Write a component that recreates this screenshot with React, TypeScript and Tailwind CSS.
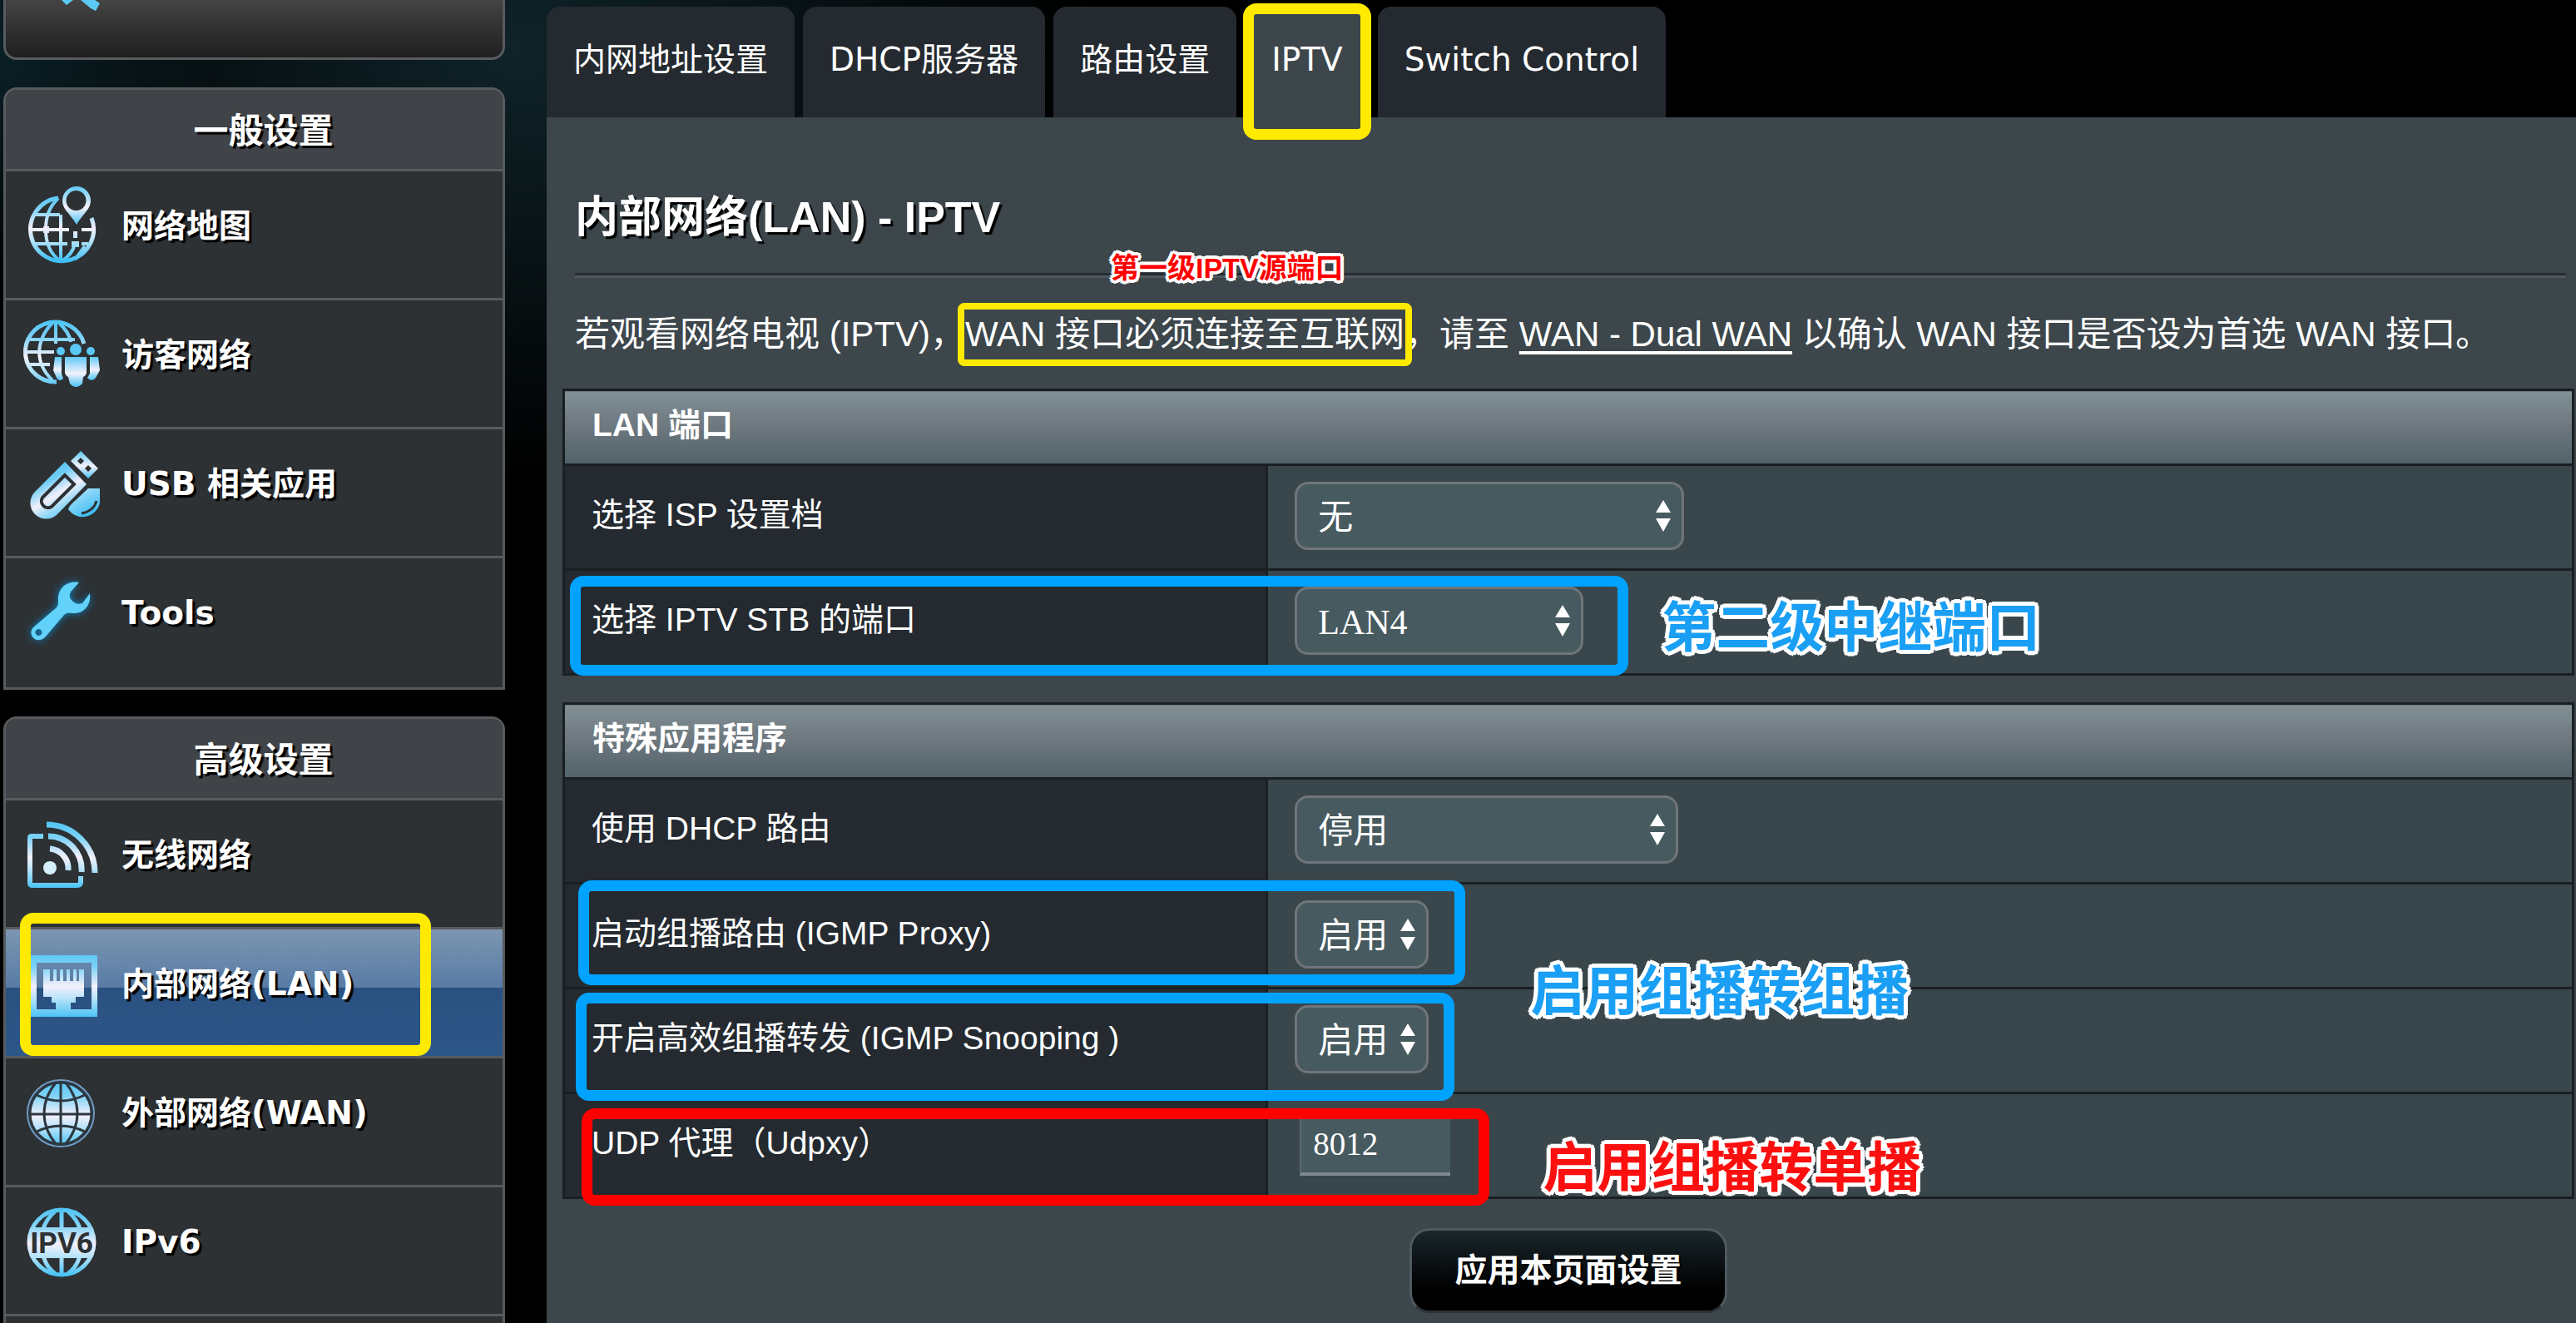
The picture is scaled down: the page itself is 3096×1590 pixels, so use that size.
import React from "react";

const latinCjk = "font-['DejaVu_Sans','Noto_Sans_CJK_SC',sans-serif]";

function IconDefs() {
  return (
    <svg className="absolute h-0 w-0" aria-hidden="true">
      <defs>
        <linearGradient id="ice" gradientUnits="userSpaceOnUse" x1="0" y1="10" x2="0" y2="95">
          <stop offset="0" stopColor="#4cc4f5" />
          <stop offset="0.25" stopColor="#7fd2f6" />
          <stop offset="0.52" stopColor="#f4f0fb" />
          <stop offset="0.7" stopColor="#b5e3fa" />
          <stop offset="1" stopColor="#38bdf3" />
        </linearGradient>
        <linearGradient id="iceShort" gradientUnits="objectBoundingBox" x1="0" y1="0" x2="0" y2="1">
          <stop offset="0" stopColor="#5fc9f6" />
          <stop offset="0.55" stopColor="#f4f2fc" />
          <stop offset="1" stopColor="#49c2f4" />
        </linearGradient>
        <linearGradient id="diag" gradientUnits="userSpaceOnUse" x1="30" y1="20" x2="75" y2="95">
          <stop offset="0" stopColor="#3fbdf2" />
          <stop offset="0.3" stopColor="#6fcdf6" />
          <stop offset="0.52" stopColor="#f2f0fb" />
          <stop offset="0.7" stopColor="#8fd8f8" />
          <stop offset="1" stopColor="#3dbdf4" />
        </linearGradient>
      </defs>
    </svg>
  );
}

function Icon({ children }: { children: React.ReactNode }) {
  return (
    <svg viewBox="0 0 100 100" className="size-[100px] shrink-0" fill="none" aria-hidden="true">
      {children}
    </svg>
  );
}

const MapIcon = () => (
  <Icon>
    <g stroke="url(#ice)">
      <path d="M46 18 A38 38 0 1 0 86 42" strokeWidth="5" />
      <path d="M46 18 C34 30 31 42 31 56 C31 72 37 86 49 94 M49 38 V94 M18 38 H48 M11 56 H59 M74 56 H88 M17 73 H57 M74 73 H82" strokeWidth="4" />
      <path d="M66 73 C64 82 58 89 50 94 M78 76 L66 92" strokeWidth="4" />
    </g>
    <path fill="url(#ice)" d="M64 58 H69 V66 H64 Z M62 70 H71 V77 H62 Z M28 52 H35 V60 H28 Z" />
    <path fillRule="evenodd" fill="url(#iceShort)" d="M68 4 C58 4 51 12 51 21 C51 32 60 36 68 50 C76 36 85 32 85 21 C85 12 78 4 68 4 Z M68 9 A12 12 0 1 1 67 9 Z" />
  </Icon>
);

const GuestIcon = () => (
  <Icon>
    <g stroke="url(#ice)" strokeWidth="4">
      <path d="M77 38 A36 36 0 1 0 44 84" strokeWidth="5" />
      <path d="M43 12 V38 M39 13 C18 35 18 62 39 82 M47 13 C56 22 60 28 61 36 M12 33 H66 M8 48 H41 M12 63 H36" />
    </g>
    <g fill="url(#iceShort)">
      <path d="M54 54 H80 V72 Q80 76 76 78 L75 86 Q67 94 60 86 L58 78 Q54 76 54 72 Z" />
      <path d="M42 54 H50 V74 L52 80 Q47 85 44 79 L40 70 Z" />
      <path d="M84 54 H94 L96 70 L91 79 Q86 85 81 79 L84 74 Z" />
    </g>
    <g fill="#5ac8f5">
      <circle cx="67" cy="45" r="7" />
      <circle cx="49" cy="47" r="5" />
      <circle cx="85" cy="47" r="5" />
    </g>
  </Icon>
);

const UsbIcon = () => (
  <Icon>
    <path fill="url(#diag)" d="M54 25 L18 61 A19 19 0 0 0 45 88 L80 52 Z" />
    <path stroke="#2d3134" strokeWidth="4" d="M54 41 L27 68 A8 8 0 0 0 38 79 L65 52 Z" />
    <path fillRule="evenodd" fill="url(#iceShort)" d="M73 12 L94 33 L82 45 L61 24 Z M73 20 L69 24 L73 28 L77 24 Z M82 29 L78 33 L82 37 L86 33 Z" />
    <path fill="url(#diag)" d="M82 57 H96 V74 A21 21 0 0 1 58 82 Q59 78 66 72 Z" />
    <path stroke="#2d3134" strokeWidth="3" d="M92 72 Q89 84 74 87" />
  </Icon>
);

const WrenchShape = () => (
  <path
    fillRule="evenodd"
    d="M71 15 C56 12 45 23 46 36 C46 41 46 43 43 46 L16 69 C8 78 20 90 30 81 L53 54 C56 51 59 51 64 52 C77 53 86 42 84 28 L75 40 Q67 43 61 35 Q58 29 62 25 Z M23 71 A4 4 0 1 1 22 71 Z"
  />
);

const WrenchIcon = () => (
  <Icon>
    <g fill="#0a83c4" className="blur-[5px]">
      <WrenchShape />
    </g>
    <g fill="#62d2fa">
      <WrenchShape />
    </g>
  </Icon>
);

const WifiIcon = () => (
  <Icon>
    <g stroke="url(#ice)" strokeWidth="6" strokeLinecap="butt">
      <path d="M28 29 H14 Q12 29 12 31 V85 Q12 88 15 88 H69 Q73 88 73 84 V77" />
      <path d="M36 44 A24 24 0 0 1 58 70" strokeWidth="7" />
      <path d="M34 29 A40 40 0 0 1 74 72" strokeWidth="7" />
      <path d="M32 15 A58 58 0 0 1 90 73" strokeWidth="7" />
    </g>
    <circle cx="36" cy="67" r="8" fill="#d6effc" />
  </Icon>
);

const LanIcon = () => (
  <Icon>
    <path fillRule="evenodd" fill="url(#ice)" d="M12 17 H93 V91 H12 Z M20 26 V82 H86 V26 Z" />
    <path fill="url(#ice)" d="M28 34 H36 V48 H40 V34 H44 V48 H48 V34 H52 V48 H56 V34 H60 V48 H64 V34 H68 V48 H71 V34 H77 V67 H67 V74 H61 V84 H43 V74 H38 V67 H28 Z" />
  </Icon>
);

const WanIcon = () => (
  <Icon>
    <circle cx="49" cy="52" r="38" fill="url(#ice)" />
    <circle cx="49" cy="52" r="40" stroke="#6f9cc4" strokeWidth="2" />
    <g stroke="#2d3740" strokeWidth="3">
      <circle cx="49" cy="52" r="37" />
      <path d="M49 13 V91 M10 53 H88 M44 14 C24 38 24 66 44 90 M54 14 C74 38 74 66 54 90 M20 30 Q49 44 78 30 M20 74 Q49 60 78 74" />
    </g>
  </Icon>
);

const Ipv6Icon = () => (
  <Icon>
    <g stroke="url(#ice)" strokeWidth="5">
      <circle cx="50" cy="52" r="39" />
      <path d="M50 12 V92 M43 14 C34 22 30 28 28 36 M57 14 C66 22 70 28 72 36 M28 68 C30 76 34 84 43 90 M72 68 C70 76 66 84 57 90" />
    </g>
    <path fill="url(#ice)" d="M13 34 H87 Q94 52 87 71 H13 Q6 52 13 34 Z" />
    <text x="50" y="65" textAnchor="middle" fontSize="35" className="fill-[#2d3134] font-['Roboto',sans-serif] font-bold [text-shadow:none]">
      IPV6
    </text>
  </Icon>
);

type Item = { label: string; icon: React.ReactNode; active?: boolean };

const general: Item[] = [
  { label: "网络地图", icon: <MapIcon /> },
  { label: "访客网络", icon: <GuestIcon /> },
  { label: "USB 相关应用", icon: <UsbIcon /> },
  { label: "Tools", icon: <WrenchIcon /> },
];

const advanced: Item[] = [
  { label: "无线网络", icon: <WifiIcon /> },
  { label: "内部网络(LAN)", icon: <LanIcon />, active: true },
  { label: "外部网络(WAN)", icon: <WanIcon /> },
  { label: "IPv6", icon: <Ipv6Icon /> },
];

function MenuPanel({ title, items, open }: { title: string; items: Item[]; open?: boolean }) {
  return (
    <nav
      className={
        "rounded-t-2xl border-[3px] border-[#585b5d] bg-[#2d3134] font-bold text-white [text-shadow:3px_3px_1px_#000] " +
        (open ? "border-b-0" : "pb-[3px]")
      }
    >
      <h2 className="flex h-[95px] items-center justify-center rounded-t-xl bg-[#404347] pt-1 pl-[22px] text-[42px]">{title}</h2>
      <ul>
        {items.map((item) => (
          <li
            key={item.label}
            className={
              "relative h-[155px] border-t-[3px] border-[#585b5d] " +
              (item.active ? "bg-[linear-gradient(#7c96b1,#587ba5_46%,#2a5180_46%,#2d5789)]" : "")
            }
          >
            <a href="#" className="flex h-full items-start gap-[22px] pt-[14px] pl-[17px] text-[39px]">
              {item.icon}
              <span className="leading-[104px]">{item.label}</span>
            </a>
            {item.active && (
              <span className="pointer-events-none absolute -top-5 left-[17px] z-10 h-[172px] w-[494px] rounded-2xl border-[13px] border-[#ffea00]" />
            )}
          </li>
        ))}
        {open && <li className="h-[11px] border-t-[3px] border-[#585b5d]" />}
      </ul>
    </nav>
  );
}

const bigNote =
  "text-[65px] leading-[80px] [text-shadow:5px_0_white,4px_3px_white,3px_4px_white,0_5px_white,-3px_4px_white,-4px_3px_white,-5px_0_white,-4px_-3px_white,-3px_-4px_white,0_-5px_white,3px_-4px_white,4px_-3px_white]";
const smallNote =
  "text-[34px] leading-[50px] [text-shadow:4px_0_white,3px_3px_white,0_4px_white,-3px_3px_white,-4px_0_white,-3px_-3px_white,0_-4px_white,3px_-3px_white]";

function Callout({ className, children }: { className: string; children: string }) {
  return (
    <span
      className={
        "pointer-events-none absolute z-20 font-['Liberation_Sans','Noto_Sans_CJK_SC',sans-serif] font-bold whitespace-nowrap " +
        className
      }
    >
      {children}
    </span>
  );
}

function Frame({ className }: { className: string }) {
  return <span className={"pointer-events-none absolute z-10 rounded-2xl border-[13px] " + className} />;
}

function Select({ id, value, className }: { id: string; value: string; className: string }) {
  return (
    <div className={"relative " + className}>
      <select
        id={id}
        defaultValue={value}
        className="h-[82px] w-full appearance-none rounded-2xl border-[3px] border-[#70757a] bg-[#475a5f] pt-1 pl-[25px] font-['Liberation_Serif','Noto_Sans_CJK_SC',serif] text-[42px] text-white"
      >
        <option>{value}</option>
      </select>
      <svg viewBox="0 0 20 38" className="pointer-events-none absolute top-[22px] right-[15px] h-[38px] w-[20px] fill-white" aria-hidden="true">
        <path d="M10 0 L19 15 H1 Z M10 38 L19 22 H1 Z" />
      </svg>
    </div>
  );
}

function SettingsTable({ title, children }: { title: string; children: React.ReactNode }) {
  return (
    <table className="w-full table-fixed border-collapse border-[3px] border-[#1a1f22] text-left text-[39px]">
      <colgroup>
        <col className="w-[35%]" />
        <col />
      </colgroup>
      <thead>
        <tr>
          <th colSpan={2} className="h-[90px] bg-[linear-gradient(#829095,#6c777e_50%,#52626a)] pb-1 pl-[33px] font-bold">
            {title}
          </th>
        </tr>
      </thead>
      <tbody>{children}</tbody>
    </table>
  );
}

function Row({ id, label, overlay, note, children }: { id: string; label: string; overlay?: React.ReactNode; note?: React.ReactNode; children: React.ReactNode }) {
  return (
    <tr className="h-[126px]">
      <th scope="row" className="relative border-[3px] border-[#1a1f22] bg-[#242a30] pb-1 pl-[32px] font-normal">
        <label htmlFor={id}>{label}</label>
        {overlay}
      </th>
      <td className="relative border-[3px] border-[#1a1f22] bg-[#39474c] pb-[3px] pl-[32px]">
        {children}
        {note}
      </td>
    </tr>
  );
}

const tabs = ["内网地址设置", "DHCP服务器", "路由设置", "IPTV", "Switch Control"];

export default function App() {
  return (
    <div
      className={
        "flex min-h-screen overflow-hidden bg-black bg-[radial-gradient(ellipse_700px_520px_at_620px_60px,#0f2329,transparent),radial-gradient(ellipse_260px_300px_at_0px_60px,#0a2026,transparent)] text-white " +
        latinCjk
      }
    >
      <IconDefs />
      <aside className="ml-1 w-[603px] shrink-0">
        <div className="h-[72px] rounded-b-2xl border-[3px] border-t-0 border-[#585b5d] bg-linear-to-b from-[#444444] to-[#1f1f1f]">
          <svg viewBox="0 0 50 14" className="ml-[66px] h-[14px] w-[50px]" aria-hidden="true">
            <path d="M1 0 H15 L7 6 Z M24 0 H41 L47 4 L42 13 L36 10 Z" fill="#5cc9f5" />
          </svg>
        </div>
        <div className="mt-[33px]">
          <MenuPanel title="一般设置" items={general} />
        </div>
        <div className="mt-8">
          <MenuPanel title="高级设置" items={advanced} open />
        </div>
      </aside>

      <div className="ml-[50px] flex min-w-0 grow flex-col pt-2">
        <div role="tablist" className="flex gap-[10px]">
          {tabs.map((tab) => {
            const active = tab === "IPTV";
            return (
              <button
                key={tab}
                role="tab"
                aria-selected={active}
                className={"relative h-[133px] rounded-t-2xl px-8 pb-1 text-[39px] " + (active ? "bg-[#3c464b]" : "bg-[#242a30]")}
              >
                {tab}
                {active && <Frame className="-inset-x-[2px] -top-1 h-[164px] border-[#ffea00]" />}
              </button>
            );
          })}
        </div>

        <main className="grow bg-[#3c464b] pt-[90px] font-['Liberation_Sans','Noto_Sans_CJK_SC',sans-serif]">
          <div className="pr-3 pl-[34px]">
            <h1 className="text-[52px] leading-[60px] font-bold [text-shadow:3px_3px_1px_#000]">内部网络(LAN) - IPTV</h1>
            <div className="relative mt-[37px] border-t-[3px] border-b-[3px] border-t-[#262d33] border-b-[#4e5961]">
              <Callout className={"-top-[34px] left-[644px] text-[#f00] " + smallNote}>第一级IPTV源端口</Callout>
            </div>
            <p className="mt-[38px] text-[42px] leading-[60px] whitespace-nowrap">
              若观看网络电视 (IPTV)，
              <span className="relative">
                WAN 接口必须连接至互联网
                <span className="pointer-events-none absolute -inset-x-[9px] -top-[14px] -bottom-[15px] rounded-lg border-8 border-[#ffea00]" />
              </span>
              ，请至{" "}
              <a href="#" className="underline underline-offset-[6px]">
                WAN - Dual WAN
              </a>{" "}
              以确认 WAN 接口是否设为首选 WAN 接口。
            </p>
          </div>

          <div className="mt-[35px] mr-[2px] ml-[19px] flex flex-col gap-8">
            <SettingsTable title="LAN 端口">
              <Row id="isp" label="选择 ISP 设置档">
                <Select id="isp" value="无" className="w-[468px]" />
              </Row>
              <Row
                id="stb"
                label="选择 IPTV STB 的端口"
                overlay={<Frame className="top-[6px] left-[6px] h-[120px] w-[1272px] border-[#00a2ff]" />}
                note={<Callout className={"top-[29px] left-[473px] text-[#1a9ff5] " + bigNote}>第二级中继端口</Callout>}
              >
                <Select id="stb" value="LAN4" className="w-[347px]" />
              </Row>
            </SettingsTable>

            <SettingsTable title="特殊应用程序">
              <Row id="dhcp" label="使用 DHCP 路由">
                <Select id="dhcp" value="停用" className="w-[461px]" />
              </Row>
              <Row
                id="proxy"
                label="启动组播路由 (IGMP Proxy)"
                overlay={<Frame className="-top-[5px] left-[16px] h-[126px] w-[1066px] border-[#00a2ff]" />}
                note={<Callout className={"top-[89px] left-[315px] text-[#1a9ff5] " + bigNote}>启用组播转组播</Callout>}
              >
                <Select id="proxy" value="启用" className="w-[161px]" />
              </Row>
              <Row
                id="snoop"
                label="开启高效组播转发 (IGMP Snooping )"
                overlay={<Frame className="top-[4px] left-[13px] h-[130px] w-[1056px] border-[#00a2ff]" />}
              >
                <Select id="snoop" value="启用" className="w-[161px]" />
              </Row>
              <Row
                id="udpxy"
                label="UDP 代理（Udpxy）"
                overlay={<Frame className="top-[17px] left-[20px] h-[117px] w-[1091px] border-[#f00]" />}
                note={<Callout className={"top-[49px] left-[330px] text-[#fb0f0f] " + bigNote}>启用组播转单播</Callout>}
              >
                <input
                  id="udpxy"
                  type="text"
                  defaultValue="8012"
                  className="ml-[6px] block h-[76px] w-[181px] border-b-4 border-l-2 border-b-[#7c8a90] border-l-[#5c6b70] bg-[#475a5f] pt-[3px] pl-[14px] font-['Liberation_Serif',serif] text-[39px]"
                />
              </Row>
            </SettingsTable>
          </div>

          <div className="mt-[35px] mb-2 ml-[17px] flex justify-center">
            <button className="h-[102px] rounded-[24px] border-[3px] border-[#4e5a60] border-b-[#2b3338] bg-linear-to-b from-[#1b282d] via-[#080c0e] to-black px-[51px] text-[39px] font-bold [text-shadow:2px_2px_1px_#000]">
              应用本页面设置
            </button>
          </div>
        </main>
      </div>
    </div>
  );
}
